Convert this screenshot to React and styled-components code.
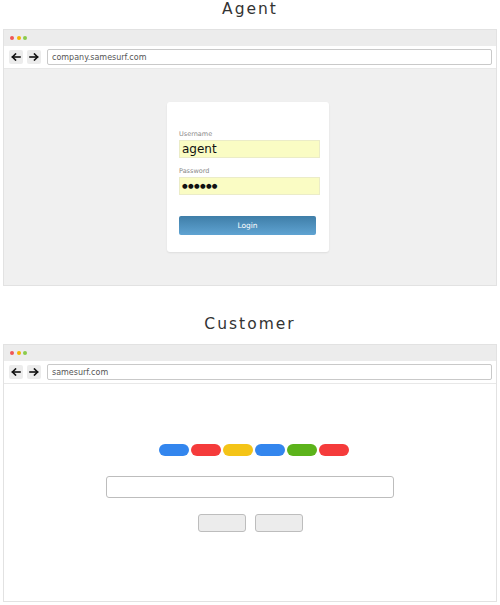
import React from "react";
import styled, { createGlobalStyle } from "styled-components";

const Global = createGlobalStyle`
  html, body {
    margin: 0;
    padding: 0;
    background: #ffffff;
  }
  body {
    width: 500px;
    font-family: "DejaVu Sans", "Liberation Sans", sans-serif;
  }
`;

const Page = styled.div`
  display: flex;
  flex-direction: column;
  padding: 0 3px;
`;

const Section = styled.section`
  display: flex;
  flex-direction: column;
  margin-top: ${(props) => props.offset || 0}px;
`;

const Title = styled.h2`
  margin: 0;
  height: ${(props) => props.h || 29}px;
  line-height: 18px;
  text-align: center;
  font-family: "DejaVu Sans", sans-serif;
  font-weight: 400;
  font-size: 15.5px;
  letter-spacing: 2px;
  color: #333;
`;

const Frame = styled.div`
  display: flex;
  flex-direction: column;
  border: 1px solid #e2e2e2;
`;

const TitleBar = styled.div`
  height: 16px;
  background: #ececec;
  display: flex;
  align-items: center;
  gap: 2.5px;
  padding-left: 6px;
`;

const Dot = styled.span`
  width: 4px;
  height: 4px;
  border-radius: 50%;
  background: ${(props) => props.color};
`;

const Toolbar = styled.div`
  height: 22px;
  background: #fff;
  display: flex;
  align-items: center;
  padding: 0 4px 0 5px;
  gap: 4px;
  border-bottom: 1px solid #e8e8e8;
`;

const NavButton = styled.div`
  width: 14px;
  height: 14px;
  border-radius: 2px;
  background: #ececec;
  display: flex;
  align-items: center;
  justify-content: center;
`;

const UrlField = styled.div`
  flex: 1;
  margin-left: 2px;
  height: 14px;
  border: 1px solid #c9c9c9;
  border-radius: 2px;
  display: flex;
  align-items: center;
  padding-left: 4px;
  font-size: 8px;
  color: #555;
`;

const Content = styled.div`
  height: ${(props) => props.h}px;
  background: ${(props) => props.bg};
  display: flex;
  flex-direction: column;
  align-items: center;
  padding-top: ${(props) => props.pt}px;
  box-sizing: border-box;
`;

const Card = styled.div`
  width: 162px;
  height: 150px;
  margin-right: 4px;
  box-sizing: border-box;
  background: #fff;
  border-radius: 3px;
  box-shadow: 0 1px 2px rgba(0, 0, 0, 0.08);
  padding: 28px 9px 0 12px;
  display: flex;
  flex-direction: column;
`;

const Label = styled.label`
  font-size: 6.5px;
  color: #888;
  margin-bottom: 2px;
  line-height: 8px;
`;

const Field = styled.div`
  height: 18px;
  box-sizing: border-box;
  background: #fafcc4;
  border: 1px solid #ebecc8;
  display: flex;
  align-items: center;
  padding-left: 2px;
  font-size: ${(props) => (props.secret ? 6.5 : 12)}px;
  letter-spacing: ${(props) => (props.secret ? 0.3 : 0)}px;
  color: #111;
  margin-bottom: 9px;
`;

const LoginButton = styled.div`
  margin-top: 12px;
  width: 137px;
  height: 19px;
  border-radius: 2px;
  background: linear-gradient(#3f7ea8, #5fa3d2);
  color: #fff;
  font-size: 7.5px;
  display: flex;
  align-items: center;
  justify-content: center;
`;

const Pills = styled.div`
  display: flex;
  gap: 2px;
  margin-left: 7px;
`;

const Pill = styled.span`
  width: 30px;
  height: 12px;
  border-radius: 6px;
  background: ${(props) => props.color};
`;

const SearchBox = styled.div`
  margin-top: 20px;
  width: 288px;
  height: 22px;
  box-sizing: border-box;
  border: 1px solid #bdbdbd;
  border-radius: 3px;
`;

const Buttons = styled.div`
  margin-top: 16px;
  display: flex;
  gap: 9px;
`;

const GrayButton = styled.div`
  width: 48px;
  height: 18px;
  box-sizing: border-box;
  background: #ececec;
  border: 1px solid #bdbdbd;
  border-radius: 3px;
`;

const Arrow = ({ dir }) => (
  <svg width="10" height="8" viewBox="0 0 10 8">
    <g
      transform={dir === "left" ? "" : "rotate(180 5 4)"}
      fill="none"
      stroke="#111"
      strokeWidth="1.6"
      strokeLinecap="square"
    >
      <path d="M1.5 4H9" />
      <path d="M4.5 1L1.5 4L4.5 7" />
    </g>
  </svg>
);

const Browser = ({ url, children }) => (
  <Frame>
    <TitleBar>
      <Dot color="#f05656" />
      <Dot color="#f5b400" />
      <Dot color="#8bcb4a" />
    </TitleBar>
    <Toolbar>
      <NavButton>
        <Arrow dir="left" />
      </NavButton>
      <NavButton>
        <Arrow dir="right" />
      </NavButton>
      <UrlField>{url}</UrlField>
    </Toolbar>
    {children}
  </Frame>
);

const pillColors = ["#3386ee", "#f53b3b", "#f4c417", "#3386ee", "#5cb31b", "#f53b3b"];

export default function App() {
  return (
    <Page>
      <Global />
      <Section>
        <Title>Agent</Title>
        <Browser url="company.samesurf.com">
          <Content h={216} bg="#f0f0f0" pt={33}>
            <Card>
              <Label>Username</Label>
              <Field>agent</Field>
              <Label>Password</Label>
              <Field secret>●●●●●●</Field>
              <LoginButton>Login</LoginButton>
            </Card>
          </Content>
        </Browser>
      </Section>
      <Section offset={29}>
        <Title>Customer</Title>
        <Browser url="samesurf.com">
          <Content h={217} bg="#fff" pt={60}>
            <Pills>
              {pillColors.map((c, i) => (
                <Pill key={i} color={c} />
              ))}
            </Pills>
            <SearchBox />
            <Buttons>
              <GrayButton />
              <GrayButton />
            </Buttons>
          </Content>
        </Browser>
      </Section>
    </Page>
  );
}
